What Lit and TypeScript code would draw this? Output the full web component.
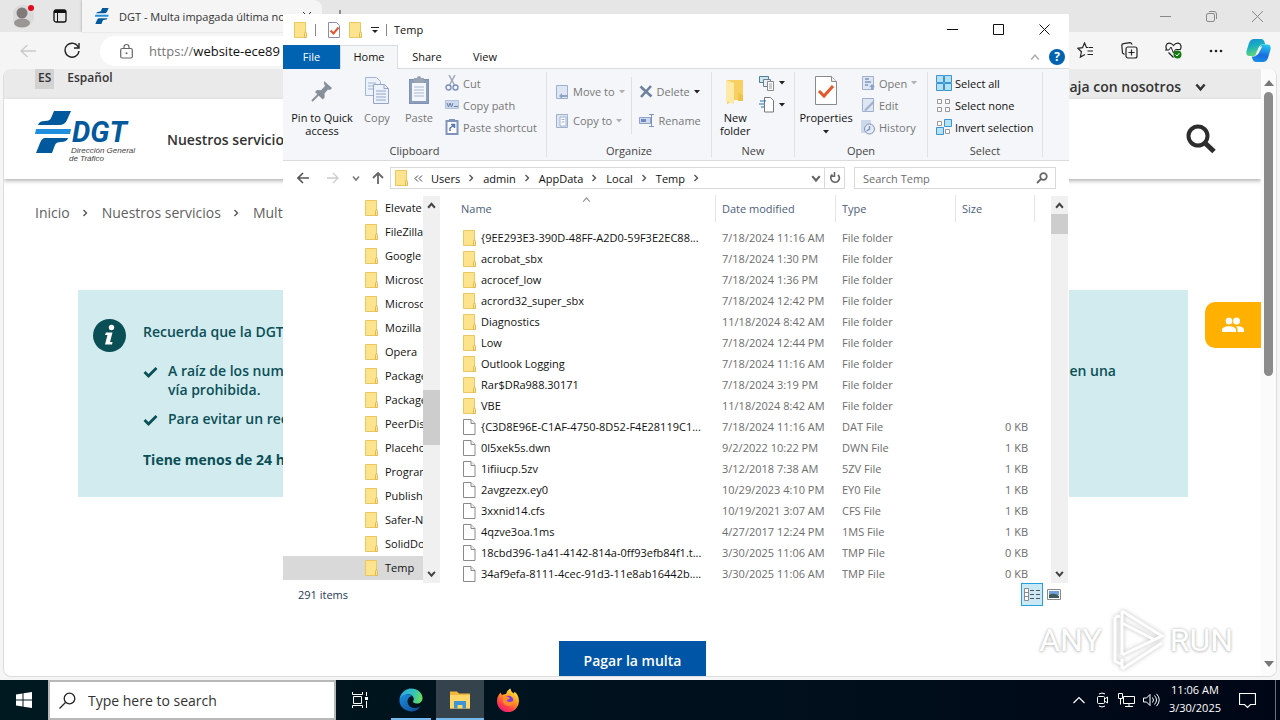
import { LitElement, html, svg, css, nothing, TemplateResult } from "lit";
import { customElement } from "lit/decorators.js";
import { classMap } from "lit/directives/class-map.js";

const base = css`
  :host { display: block; box-sizing: border-box; font-family: "Open Sans", "Noto Sans", sans-serif; }
  *, *::before, *::after { box-sizing: border-box; }
  button, input { font: inherit; color: inherit; background: none; border: 0; padding: 0; margin: 0; text-align: left; }
  input { outline: none; min-width: 0; }
  a { color: inherit; text-decoration: none; }
  svg { display: block; flex: none; }
  ul, ol, p { margin: 0; padding: 0; list-style: none; }
`;

const icon = (w: number, h: number, body: TemplateResult) =>
  html`<svg width=${w} height=${h} viewBox="0 0 ${w} ${h}" fill="none" aria-hidden="true">${body}</svg>`;

const chevron = (dir: "up" | "down" | "right", color = "#555", size = 8, width = 1.5) => {
  const d = dir === "up" ? "M1 6 4 2.5 7 6" : dir === "down" ? "M1 2.5 4 6 7 2.5" : "M2.5 1 5.5 4 2.5 7";
  return html`<svg width=${size} height=${size} viewBox="0 0 8 8" fill="none" aria-hidden="true">
    <path d=${d} stroke=${color} stroke-width=${width}/></svg>`;
};

const folder = () => icon(14, 16, svg`
  <path d="M0.5 0.5h11v15h-11z" fill="#fde38b" stroke="#ecc75f"/>
  <path d="M11 1.5h1v9h-1z" fill="#e9c765"/>
  <path d="M10.5 15.5v-4l1-2 1 2v4z" fill="#fdeaa8" stroke="#e3b84c"/>`);

const sheet = () => icon(14, 16, svg`
  <path d="M0.5 0.5h7.500l4 4v11h-11.500z" fill="#fff" stroke="#8a8a8a"/>
  <path d="M8 0.500v4h4" fill="#eee" stroke="#8a8a8a"/>`);

const caret = (color = "#222") => icon(6, 4, svg`<path d="M0 0h6l-3 3.500z" fill=${color}/>`);

const dgtShapes = svg`
  <path d="M19 0h17l-4 9q-2 5-8 5H3q1-4 7-4 5 0 6-3z" fill="#00599c"/>
  <path d="M1 18h35l-1 5H0z" fill="#1f8fdd"/>
  <path d="M10 27h23q-1 4-7 4-5 0-6 3l-3 8H1l4-10q2-5 5-5z" fill="#00599c"/>`;

@customElement("dgt-page")
export class DgtPage extends LitElement {
  static styles = [base, css`
    :host { display: flex; flex: 1; min-height: 0; background: #fff; border: 1px solid #dcdcdc; border-top: 0; border-radius: 8px; overflow: hidden; color: #333; font-size: 14px; }
    .doc { flex: 1; display: flex; flex-direction: column; min-width: 0; overflow: hidden; }
    .lang { height: 30px; flex: none; background: #eaeaea; display: flex; align-items: flex-start; padding: 0 55px 0 31px; font-weight: 600; }
    .code { height: 20px; padding: 0 3px; background: #d2d2d2; font-size: 12px; line-height: 18px; }
    .name { margin-left: 13px; font-size: 12px; line-height: 18px; flex: 1; }
    .work { display: flex; align-items: center; gap: 14px; height: 34px; }
    .head { height: 80px; flex: none; display: flex; align-items: center; padding: 0 45px 0 31px; box-shadow: 0 2px 4px rgba(0,0,0,.3); }
    .logo { display: block; margin-right: 30px; margin-top: -5px; }
    .main { flex: 1; font-weight: 600; }
    .crumbs { display: flex; align-items: center; gap: 13px; padding: 24px 31px 0; line-height: 20px; color: #5f5f5f; }
    .crumbs li { display: flex; align-items: center; gap: 11px; }
    .alert { display: flex; flex: none; gap: 17px; margin: 67px 73px 0 74px; padding: 29px 72px 25px 15px; background: #d2ebef; color: #0b4f56; font-weight: 600; height: 207px; }
    .body { flex: 1; line-height: 19px; padding-top: 3px; }
    .point { display: flex; gap: 10px; margin-top: 10px; }
    .point svg { margin-top: 5px; }
    .first { margin-top: 20px; }
    .wide { flex: 1; }
    .split { display: flex; justify-content: space-between; }
    .strong { font-weight: 700; margin-top: 22px; }
    .cta { display: flex; justify-content: center; margin-top: 144px; }
    .pay { background: #0055a6; color: #fff; font-weight: 600; padding: 0 25px; height: 40px; line-height: 40px; }
    .bar { width: 15px; flex: none; display: flex; flex-direction: column; align-items: center; background: #fbfbfb; padding: 11px 0 9px; }
    .thumb { width: 9px; height: 284px; border-radius: 5px; background: #8b8b8b; margin-top: 6px; }
    .grow { flex: 1; }
    .people { position: absolute; right: 19px; top: 302px; width: 56px; height: 46px; border-radius: 10px 0 0 10px; background: #ffb000; display: grid; place-items: center; }
  `];

  private sep() { return chevron("right", "#555", 8, 1.4); }
  private check() {
    return icon(15, 12, svg`<path d="M1.500 6 5.500 10 13.500 2" stroke="#0b4f56" stroke-width="2.800"/>`);
  }

  render() {
    return html`
      <div class="doc">
        <div class="lang">
          <a class="code" href="#es">ES</a><span class="name">Español</span>
          <a class="work" href="#trabaja">Trabaja con nosotros ${chevron("down", "#333", 11, 1.8)}</a>
        </div>
        <header class="head">
          <a class="logo" href="#inicio" aria-label="DGT">
            <svg width="102" height="52" viewBox="0 0 102 52">
              ${dgtShapes}
              <text x="37" y="31" font-family="Roboto" font-size="29" font-weight="700" font-style="italic" fill="#00599c">DGT</text>
              <text x="36" y="42" font-family="Liberation Sans" font-size="8" font-style="italic" fill="#444">Dirección General</text>
              <text x="34" y="50" font-family="Liberation Sans" font-size="8" font-style="italic" fill="#444">de Tráfico</text>
            </svg>
          </a>
          <nav class="main"><a href="#servicios">Nuestros servicios</a></nav>
          <button aria-label="Buscar">${icon(30, 30, svg`<circle cx="12" cy="12" r="9.500" stroke="#2d2d2d" stroke-width="4"/><path d="M18.500 18.500 28 27.500" stroke="#2d2d2d" stroke-width="5"/>`)}</button>
        </header>
        <ol class="crumbs">
          <li><a href="#inicio">Inicio</a>${this.sep()}</li>
          <li><a href="#servicios">Nuestros servicios</a>${this.sep()}</li>
          <li><span>Multas</span></li>
        </ol>
        <section class="alert">
          ${icon(33, 33, svg`<circle cx="16.500" cy="16.500" r="16.500" fill="#0b4f56"/><circle cx="18.500" cy="8.500" r="2.700" fill="#fff"/><path d="M13 13.500h6.500l-2.500 9.500h2.500l-.5 2.500h-7l2.500-9.500h-2.500z" fill="#fff"/>`)}
          <div class="body">
            <p>Recuerda que la DGT</p>
            <ul>
              <li class="point first">${this.check()}<div class="wide"><div class="split"><span>A raíz de los nume</span><span>en una</span></div>vía prohibida.</div></li>
              <li class="point">${this.check()}<div class="wide">Para evitar un recargo</div></li>
            </ul>
            <p class="strong">Tiene menos de 24 horas</p>
          </div>
        </section>
        <div class="cta"><button class="pay">Pagar la multa</button></div>
      </div>
      <div class="bar">
        ${icon(10, 6, svg`<path d="M5 0 10 6H0z" fill="#777"/>`)}
        <div class="thumb"></div><div class="grow"></div>
        ${icon(10, 6, svg`<path d="M5 6 10 0H0z" fill="#777"/>`)}
      </div>
      <button class="people" aria-label="Contacto">${icon(22, 16, svg`
        <circle cx="14.500" cy="4" r="3.500" fill="#fff"/>
        <path d="M0 15v-2c0-5 14-5 14 0v2zM15.500 15v-2.500q0-2-1.500-3.300 8-.5 8 3.800v2z" fill="#fff"/><circle cx="7" cy="4" r="4" fill="#fff" stroke="#ffb000"/>`)}</button>
    `;
  }
}

@customElement("edge-browser")
export class EdgeBrowser extends LitElement {
  static styles = [base, css`
    :host { display: flex; flex-direction: column; background: #f5f5f5; height: 100%; padding-bottom: 3px; }
    .strip { height: 32px; flex: none; display: flex; align-items: center; background: #e6e6e6; }
    .avatar { margin-left: 13px; }
    .tabs { margin-left: 16px; }
    .tab { align-self: stretch; width: 240px; margin-left: 15px; padding: 0 10px 0 13px; background: #f5f5f5; border-radius: 0 8px 0 0; display: flex; align-items: center; gap: 10px; font-size: 11px; color: #333; white-space: nowrap; box-shadow: -1px 0 2px rgba(0,0,0,.15); }
    .title { flex: 1; }
    .plus { margin-left: 12px; }
    .fill { flex: 1; }
    .wins { display: flex; gap: 35px; align-items: center; margin-right: 17px; }
    .tools { height: 37px; flex: none; display: flex; align-items: center; padding: 0 9px 0 20px; }
    .reload { margin-left: 27px; }
    .url { display: flex; align-items: center; flex: 1; height: 30px; margin: 0 40px 0 20px; padding-left: 20px; background: #fff; border-radius: 15px; font-size: 13px; color: #767676; }
    .url svg { margin-right: 16px; }
    .url input { flex: 1; color: #111; }
    .acts { display: flex; align-items: center; gap: 27px; }
    .copilot { margin-left: -4px; }
    .page { margin: 0 3px; }
  `];

  render() {
    return html`
      <div class="strip">
        <button class="avatar" aria-label="Profile">${icon(24, 24, svg`
          <circle cx="10" cy="12" r="11" fill="#dadada"/><circle cx="9" cy="9" r="5.500" fill="#807b78"/><ellipse cx="9" cy="19" rx="8" ry="4.500" fill="#9a9694"/><circle cx="18" cy="4" r="3" fill="#e00b1c"/>`)}</button>
        <button class="tabs" aria-label="Tab actions">${icon(14, 14, svg`<rect x="1" y="1" width="12" height="12" rx="2" stroke="#111" stroke-width="1.300"/><path d="M1 2.500h12" stroke="#111" stroke-width="3"/><path d="M4.500 3v10" stroke="#111"/>`)}</button>
        <div class="tab"><svg width="14" height="16" viewBox="0 0 37 42" aria-hidden="true">${dgtShapes}</svg><span class="title">DGT - Multa impagada última no</span>${icon(10, 10, svg`<path d="M1 1l8 8M9 1l-8 8" stroke="#333"/>`)}</div>
        <button class="plus" aria-label="New tab">${icon(12, 12, svg`<path d="M6 0v12M0 6h12" stroke="#333"/>`)}</button>
        <div class="fill"></div>
        <div class="wins">
          <button aria-label="Minimize">${icon(11, 11, svg`<path d="M0 5.500h11" stroke="#888"/>`)}</button>
          <button aria-label="Restore">${icon(11, 11, svg`<rect x=".5" y="2.500" width="8" height="8" rx="1.500" stroke="#888"/><path d="M3 .500h5q2.500 0 2.500 2.500v5" stroke="#888"/>`)}</button>
          <button aria-label="Close">${icon(11, 11, svg`<path d="M0 0l11 11M11 0 0 11" stroke="#888"/>`)}</button>
        </div>
      </div>
      <div class="tools">
        <button aria-label="Back">${icon(17, 14, svg`<path d="M7.500 1 1 7l6.500 6M1 7h15" stroke="#c9c9c9" stroke-width="1.300"/>`)}</button>
        <button class="reload" aria-label="Reload">${icon(16, 17, svg`<path d="M14.500 5.500A7 7 0 1 0 15 9" stroke="#222" stroke-width="1.400"/><path d="M15 1v5h-5" stroke="#222" stroke-width="1.400"/>`)}</button>
        <label class="url">
          ${icon(13, 16, svg`<rect x=".7" y="5.500" width="11.600" height="9.500" rx="1.500" stroke="#666" stroke-width="1.200"/><path d="M4 5.500V4a2.500 2.500 0 0 1 5 0v1.500" stroke="#666" stroke-width="1.200"/><circle cx="6.500" cy="10.300" r="1" fill="#666"/>`)}
          <span>https://</span><input aria-label="Address" .value=${"website-ece89"} />
        </label>
        <div class="acts">
          <button aria-label="Favorites">${icon(17, 17, svg`<path d="M11 5.500H9.500L7.500 1 5.500 5.700.8 6.300l3.600 3.500-1 5.200 4.600-2.500M11.500 5.500H16M10.500 9H16M10.500 12.500H16" stroke="#222" stroke-width="1.200"/>`)}</button>
          <button aria-label="Collections">${icon(17, 17, svg`<rect x="5" y="5" width="11" height="11" rx="2" stroke="#222" stroke-width="1.200"/><path d="M10.500 7.500v6M7.500 10.500h6M3.500 12.500 1.500 11 .800 3.500Q.800 2 2.500 1.700L9 .700q1.700 0 2 2" stroke="#222" stroke-width="1.200"/>`)}</button>
          <button aria-label="Browser essentials">${icon(17, 17, svg`<path d="M2 8C0 5 1 1.500 4 1.200Q6.500 1 8.500 3.500 10.500 1 13 1.200C16 1.500 17 5 15 8M3.500 10.500l5 5" stroke="#222" stroke-width="1.200"/><path d="M0 8h4l2-3 2.500 6 2-3.500H15" stroke="#222"/><circle cx="12.500" cy="12.500" r="4" fill="#107c10"/><path d="M10.500 12.500l1.500 1.500 2.500-3" stroke="#fff"/>`)}</button>
          <button aria-label="Settings">${icon(14, 4, svg`<circle cx="2" cy="2" r="1.300" fill="#222"/><circle cx="7" cy="2" r="1.300" fill="#222"/><circle cx="12" cy="2" r="1.300" fill="#222"/>`)}</button>
          <button class="copilot" aria-label="Copilot">${icon(25, 23, svg`
            <defs><linearGradient id="cpa" x1="0" y1="0" x2=".3" y2="1"><stop offset="0" stop-color="#168bd8"/><stop offset=".5" stop-color="#1bb1bd"/><stop offset="1" stop-color="#63d67c"/></linearGradient>
            <linearGradient id="cpb" x1=".5" y1="0" x2=".3" y2="1"><stop offset="0" stop-color="#23c3ee"/><stop offset=".6" stop-color="#1a6be0"/><stop offset="1" stop-color="#1792e8"/></linearGradient></defs>
            <path d="M8 0h7q2.500 0 3.500 3l.8 2.500h-2.800q-2.500 0-3.500 3l-2 6q-1 2.500-3.500 2.500H4q-4.500 0-3.500-5L3 4q1.500-4 5-4z" fill="url(#cpa)"/>
            <path d="M17 23h-7q-2.500 0-3.500-3L5.800 17.500H8q2.500 0 3.500-3l2-6Q14.500 5.500 17 5.500h4q4.500 0 3.500 5L22 19q-1.500 4-5 4z" fill="url(#cpb)"/>
            <path d="M13.200 7.500h3L12 15.500H9.500z" fill="#f5f5f5"/>`)}</button>
        </div>
      </div>
      <dgt-page class="page"></dgt-page>
    `;
  }
}

const TREE = ["Elevate", "FileZilla", "Google", "Microsoft", "Microsoft", "Mozilla", "Opera", "Package", "Package", "PeerDist", "Placehol", "Program", "Publishe", "Safer-Ne", "SolidDoc", "Temp"];

interface Entry { name: string; date: string; type: string; size?: string; }
const dir = (name: string, date: string): Entry => ({ name, date, type: "File folder" });
const file = (name: string, date: string, ext: string, size: string): Entry => ({ name, date, type: `${ext} File`, size: `${size} KB` });
const ENTRIES: Entry[] = [
  dir("{9EE293E3-390D-48FF-A2D0-59F3E2EC88...", "7/18/2024 11:16 AM"),
  dir("acrobat_sbx", "7/18/2024 1:30 PM"),
  dir("acrocef_low", "7/18/2024 1:36 PM"),
  dir("acrord32_super_sbx", "7/18/2024 12:42 PM"),
  dir("Diagnostics", "11/18/2024 8:42 AM"),
  dir("Low", "7/18/2024 12:44 PM"),
  dir("Outlook Logging", "7/18/2024 11:16 AM"),
  dir("Rar$DRa988.30171", "7/18/2024 3:19 PM"),
  dir("VBE", "11/18/2024 8:42 AM"),
  file("{C3D8E96E-C1AF-4750-8D52-F4E28119C1...", "7/18/2024 11:16 AM", "DAT", "0"),
  file("0l5xek5s.dwn", "9/2/2022 10:22 PM", "DWN", "1"),
  file("1ifiiucp.5zv", "3/12/2018 7:38 AM", "5ZV", "1"),
  file("2avgzezx.ey0", "10/29/2023 4:10 PM", "EY0", "1"),
  file("3xxnid14.cfs", "10/19/2021 3:07 AM", "CFS", "1"),
  file("4qzve3oa.1ms", "4/27/2017 12:24 PM", "1MS", "1"),
  file("18cbd396-1a41-4142-814a-0ff93efb84f1.t...", "3/30/2025 11:06 AM", "TMP", "0"),
  file("34af9efa-8111-4cec-91d3-11e8ab16442b....", "3/30/2025 11:06 AM", "TMP", "0"),
];

@customElement("explorer-window")
export class ExplorerWindow extends LitElement {
  static styles = [base, css`
    :host { display: flex; flex-direction: column; background: #fff; font-size: 11px; color: #111; line-height: 13px; white-space: nowrap; }
    .title { height: 31px; flex: none; display: flex; align-items: center; padding: 0 19px 0 11px; gap: 7px; }
    .line { width: 1px; height: 12px; background: #888; }
    .quick { display: flex; align-items: center; gap: 8px; padding-left: 4px; }
    .grow { flex: 1; }
    .wins { display: flex; gap: 35px; }
    .tabs { height: 24px; flex: none; display: flex; align-items: stretch; border-bottom: 1px solid #dadbdc; }
    .tab { height: 24px; width: 58px; padding-bottom: 2px; text-align: center; }
    .file { background: #0063b1; color: #fff; width: 57px; }
    .home { background: #f5f6f7; border: 1px solid #dadbdc; border-bottom: 0; }
    .help { display: flex; align-items: center; gap: 9px; padding-right: 4px; }
    .q { width: 16px; height: 16px; border-radius: 8px; background: #0063b1; color: #fff; font-weight: 700; font-size: 12px; line-height: 16px; text-align: center; }
    .ribbon { height: 92px; flex: none; display: flex; background: #f4f6f9; border-bottom: 1px solid #dadbdc; padding-top: 3px; }
    .group { display: flex; flex-direction: column; border-right: 1px solid #e0e1e3; height: 85px; }
    .cont { flex: 1; display: flex; }
    .cap { text-align: center; height: 16px; line-height: 16px; margin-bottom: -2px; color: #444; }
    .clip { width: 264px; } .org { width: 165px; } .new { width: 83px; } .open { width: 133px; } .sel { width: 115px; }
    .big { display: flex; flex-direction: column; align-items: center; text-align: center; gap: 6px; padding-top: 4px; }
    .pic { height: 29px; display: grid; place-items: center; }
    .big span { display: block; text-align: center; }
    .dim { color: #777; }
    .col { display: flex; flex-direction: column; }
    .col button { display: flex; align-items: center; gap: 4px; height: 22px; }
    .col.two { padding-top: 5px; }
    .col.two button { height: 29px; }
    .col.tight button { gap: 3px; }
    .b-pin { width: 78px; } .b-copy { width: 32px; } .b-paste { width: 52px; } .b-prop { width: 62px; margin-right: 4px; }
    .vr { width: 1px; height: 57px; background: #dfe0e2; margin: 5px 7px 0 6px; }
    .pad { padding-left: 8px; }
    .addr { height: 34px; flex: none; display: flex; align-items: center; padding: 0 13px 0 14px; }
    .navs { display: flex; align-items: center; width: 93px; gap: 18px; }
    .navs .tight { margin: 0 -6px 0 -5px; }
    .path { flex: 1; height: 22px; border: 1px solid #d9d9d9; display: flex; align-items: center; padding-left: 4px; }
    .path ol { display: flex; align-items: center; gap: 8px; margin-left: 5px; }
    .path li { display: flex; align-items: center; gap: 7px; }
    .ref { width: 20px; height: 20px; border-left: 1px solid #d9d9d9; margin-left: 3px; display: grid; place-items: center; }
    .find { width: 202px; height: 22px; border: 1px solid #d9d9d9; margin-left: 9px; display: flex; align-items: center; padding: 0 7px 0 8px; }
    .find input { flex: 1; }
    .find input::placeholder { color: #6d6d6d; opacity: 1; }
    .body { flex: 1; display: flex; min-height: 0; overflow: hidden; padding-right: 1px; }
    .tree { width: 140px; overflow: hidden; padding-top: 1px; }
    .tree button { display: flex; align-items: center; gap: 6px; height: 24px; width: 100%; padding: 0 0 1px 82px; }
    .tree .on { background: #d9d9d9; }
    .sb { width: 17px; background: #f0f0f0; display: flex; flex-direction: column; align-items: center; padding: 5px 0; margin-top: 1px; }
    .knob { width: 100%; background: #cdcdcd; }
    .k1 { height: 55px; margin-bottom: 124px; } .k2 { height: 20px; margin-top: 4px; }
    .files { flex: 1; padding: 0 0 0 15px; overflow: hidden; position: relative; }
    .sort { position: absolute; left: 142px; top: 0; }
    table { border-collapse: collapse; table-layout: fixed; width: 580px; color: #6d6d6d; }
    .c1 { width: 261px; } .c2, .c3 { width: 120px; } .c4 { width: 79px; }
    th { padding: 0 0 5px; font-weight: 400; text-align: left; color: #4c607a; height: 32px; }
    th div { height: 27px; line-height: 27px; padding-left: 6px; border-right: 1px solid #e5e5e5; }
    td { height: 21px; padding: 0 0 0 6px; }
    .nm { display: flex; align-items: center; gap: 4px; color: #111; padding-left: 2px; }
    .sz { text-align: right; padding-right: 7px; }
    .status { height: 23px; flex: none; display: flex; align-items: center; padding: 0 8px 0 15px; color: #1e395b; gap: 4px; }
    .view { width: 22px; height: 23px; border: 1px solid #26a0da; background: #cbe8f6; display: grid; place-items: center; }
  `];

  private smallDoc(extra: TemplateResult) {
    return icon(14, 16, svg`<path d="M1.500 1.500h11v13h-11z" fill="#dfe6f3" stroke="#9fb0cc"/>${extra}`);
  }

  private ribbon() {
    return html`
      <div class="ribbon">
        <section class="group clip"><div class="cont">
          <button class="big b-pin"><div class="pic">${icon(22, 22, svg`<path d="M13 1 21 8l-2 2-2-.5-3.500 4 .2 4-2 2L4 12l2-2 4 .2L14 6l-1-2.500z" fill="#87909a"/><path d="M8 14 1 21" stroke="#87909a" stroke-width="2"/>`)}</div><span>Pin to Quick<br />access</span></button>
          <button class="big b-copy dim"><div class="pic">${icon(26, 29, svg`<path d="M1.500 1.500h11l4 4v14h-15z" fill="#edf1f9" stroke="#a4b4d4"/><path d="M4 7h8M4 10h8M4 13h6" stroke="#a4b4d4"/><path d="M9.500 8.500h11l4 4v15h-15z" fill="#edf1f9" stroke="#93a6ca"/><path d="M20 8.500v4h4.500M12 15h10M12 18h10M12 21h10M12 24h10" stroke="#93a6ca"/>`)}</div><span>Copy</span></button>
          <button class="big b-paste dim"><div class="pic">${icon(22, 29, svg`<rect x="1.500" y="3.500" width="19" height="24" fill="#8c9dbe" stroke="#7f91b5"/><path d="M4 7h14v18H4z" fill="#f3f6fb"/><path d="M6 2h10v5H6z" fill="#9aa3b0"/><circle cx="11" cy="2" r="2" fill="#9aa3b0"/><path d="M6 11h10M6 14h10M6 17h10M6 20h10" stroke="#a9b8d6"/>`)}</div><span>Paste</span></button>
          <div class="col dim">
            <button>${icon(14, 16, svg`<path d="M4 0 9.500 10M10 0 4.500 10" stroke="#9aa5b8" stroke-width="1.400"/><circle cx="3.500" cy="12.500" r="2.500" stroke="#7d90b8" stroke-width="1.400"/><circle cx="10.500" cy="12.500" r="2.500" stroke="#7d90b8" stroke-width="1.400"/>`)}Cut</button>
            <button>${icon(14, 10, svg`<path d="M.5.500h13v8H.5z" fill="#cdd9ee" stroke="#b3c1dc"/><path d="M2 3l1.500 4L5 3l1.500 4L8 3M9 6.500h4" stroke="#6b7fa5"/>`)}Copy path</button>
            <button>${icon(14, 16, svg`<rect x="1.500" y="2" width="11" height="13" fill="#fff" stroke="#8094bb" stroke-width="2"/><path d="M4 0h6v3H4z" fill="#8094bb"/><path d="M5 12V9l4-3M6 5.500h3.500V9" stroke="#5478b4" stroke-width="1.500"/>`)}Paste shortcut</button>
          </div>
        </div><div class="cap">Clipboard</div></section>
        <section class="group org"><div class="cont pad">
          <div class="col two dim">
            <button>${this.smallDoc(svg`<path d="M11 5v8M7 9l-3 3 3 3v-2h6v-2H7z" fill="#8fa3c8"/>`)}Move to ${caret("#b0b0b0")}</button>
            <button>${this.smallDoc(svg`<path d="M5 4h6v9H5z" fill="#fff" stroke="#9fb0cc"/><path d="M6.500 6.500h3M6.500 9h3" stroke="#9fb0cc"/>`)}Copy to ${caret("#b0b0b0")}</button>
          </div>
          <div class="vr"></div>
          <div class="col two dim">
            <button>${icon(14, 13, svg`<path d="M1.500 1.500l11 10M12 1 2 12" stroke="#6d809f" stroke-width="2.600"/>`)}Delete ${caret()}</button>
            <button>${icon(16, 16, svg`<path d="M.5 4.500h11v6H.5z" fill="#cfdaee" stroke="#8fa3c8"/><path d="M2 6h5v3H2z" fill="#6e8bc0"/><path d="M10 1.500h5M12.500 1.500v12M10 13.500h5" stroke="#8094bb"/>`)}Rename</button>
          </div>
        </div><div class="cap">Organize</div></section>
        <section class="group new"><div class="cont pad">
          <button class="big"><div class="pic">${icon(20, 28, svg`<path d="M2 3h16v20h-8l-8 4z" fill="#f7cf62"/><path d="M1 3l8 3v21l-8-3z" fill="#fee9a6"/><path d="M13 16l5 2v6h-5z" fill="#f0c24b"/>`)}</div><span>New<br />folder</span></button>
          <div class="col pad">
            <button>${icon(16, 16, svg`<path d="M.5 1.500h9v6h-9z" fill="#cfe6ef" stroke="#4f7f98"/><path d="M4.500 4.500h7v7h-7z" fill="#e9f0f5" stroke="#6b7f90"/><path d="M8.500 6.500h6v9h-6z" fill="#fff" stroke="#888"/><path d="M10 9h3M10 11h3M10 13h3" stroke="#999"/>`)}${caret()}</button>
            <button>${icon(16, 16, svg`<path d="M5.500.500h6l3 3v11.500h-9z" fill="#fff" stroke="#777"/><path d="M1 4h6M0 7h5M2 10h3" stroke="#1d78b8"/>`)}${caret()}</button>
          </div>
        </div><div class="cap">New</div></section>
        <section class="group open"><div class="cont">
          <button class="big b-prop"><div class="pic">${icon(22, 29, svg`<path d="M.500.500h16l5 5v23H.5z" fill="#fff" stroke="#8a8a8a"/><path d="M16.500.500v5h5" fill="#eee" stroke="#8a8a8a"/><path d="M4 15l5 5 9-10" stroke="#e2572b" stroke-width="3"/>`)}</div><span>Properties</span>${caret()}</button>
          <div class="col dim">
            <button>${this.smallDoc(svg`<path d="M4 4h4M4 7h6M4 10h3" stroke="#8094bb" stroke-width="1.500"/><path d="M8 12l3-3 3 3h-2v3h-2v-3z" fill="#8fa3c8"/>`)}Open ${caret("#b0b0b0")}</button>
            <button>${this.smallDoc(svg`<path d="M3 13 12 4l1.500 1.500L5 14z" fill="#9fb0cc"/>`)}Edit</button>
            <button>${icon(14, 16, svg`<path d="M0 1h10v13H0z" fill="#cdd8ea"/><circle cx="8.500" cy="10" r="5" fill="#e4eaf5" stroke="#8094bb"/><path d="M8.500 7v3l-3 2" stroke="#8094bb" stroke-width="1.500"/>`)}History</button>
          </div>
        </div><div class="cap">Open</div></section>
        <section class="group sel"><div class="cont pad"><div class="col tight">
          <button>${icon(16, 16, svg`<path d="M.500.500h7v7h-7zM8.500.500h7v7h-7zM.500 8.500h7v7h-7zM8.500 8.500h7v7h-7z" fill="#b5e1fb" stroke="#3a95d2"/>`)}Select all</button>
          <button>${icon(16, 16, svg`<path d="M1.500 2.500h4v4h-4zM9.500 2.500h4v4h-4zM1.500 10.500h4v4h-4zM9.500 10.500h4v4h-4z" fill="#fff" stroke="#999"/>`)}Select none</button>
          <button>${icon(16, 16, svg`<path d="M1.500 2.500h4v4h-4zM9.500 10.500h4v4h-4z" fill="#fff" stroke="#999"/><path d="M8.500.500h7v7h-7zM.500 8.500h7v7h-7z" fill="#b5e1fb" stroke="#3a95d2"/>`)}Invert selection</button>
        </div></div><div class="cap">Select</div></section>
      </div>`;
  }

  render() {
    return html`
      <header class="title">
        ${folder()}<span class="line"></span>
        <div class="quick">
          ${icon(14, 16, svg`<path d="M1.500.500h8l3 3v12h-11z" fill="#fff" stroke="#8a8fa8"/><path d="M3.500 8.500l3 3 5-6" stroke="#e2572b" stroke-width="2"/>`)}
          ${folder()}${icon(8, 8, svg`<path d="M0 1.500h8" stroke="#222"/><path d="M1 4h6l-3 3z" fill="#222"/>`)}
        </div>
        <span class="line"></span>
        <span>Temp</span><span class="grow"></span>
        <div class="wins">
          <button aria-label="Minimize">${icon(11, 11, svg`<path d="M0 5.500h11" stroke="#111"/>`)}</button>
          <button aria-label="Maximize">${icon(11, 11, svg`<path d="M.500.500h10v10H.5z" stroke="#111"/>`)}</button>
          <button aria-label="Close">${icon(11, 11, svg`<path d="M.500.500l10 10M10.500.500l-10 10" stroke="#111"/>`)}</button>
        </div>
      </header>
      <nav class="tabs">
        <button class="tab file">File</button><button class="tab home">Home</button><button class="tab">Share</button><button class="tab">View</button>
        <span class="grow"></span><div class="help">${chevron("up", "#aaa", 10, 1.2)}<button class="q">?</button></div>
      </nav>
      ${this.ribbon()}
      <div class="addr">
        <div class="navs">
          <button aria-label="Back">${icon(12, 12, svg`<path d="M6 1 1 6l5 5M1 6h11" stroke="#555" stroke-width="1.600"/>`)}</button>
          <button aria-label="Forward">${icon(12, 12, svg`<path d="M6 1l5 5-5 5M11 6H0" stroke="#ccc" stroke-width="1.300"/>`)}</button>
          <button class="tight" aria-label="Recent">${chevron("down", "#777", 8)}</button>
          <button aria-label="Up">${icon(12, 12, svg`<path d="M1 6l5-5 5 5M6 1v11" stroke="#666" stroke-width="1.800"/>`)}</button>
        </div>
        <div class="path">${folder()}
          <ol><li>${icon(9, 7, svg`<path d="M4 .500 1 3.500l3 3M8 .500 5 3.500l3 3" stroke="#444"/>`)}</li>${["Users", "admin", "AppData", "Local", "Temp"].map((p) => html`<li><button>${p}</button>${chevron("right", "#555", 8, 1.4)}</li>`)}</ol>
          <span class="grow"></span>${chevron("down", "#666", 10, 1.8)}
          <button class="ref" aria-label="Refresh">${icon(12, 12, svg`<path d="M9 2.800A4.300 4.300 0 1 1 3.500 2.500" stroke="#666" stroke-width="1.700"/><path d="M5.500 0v4.200H1.500" stroke="#666" stroke-width="1.500"/>`)}</button>
        </div>
        <label class="find"><input type="text" placeholder="Search Temp" aria-label="Search Temp" />${icon(12, 12, svg`<circle cx="7.500" cy="4.500" r="3.300" stroke="#666" stroke-width="1.700"/><path d="M5 7 1 11" stroke="#666" stroke-width="1.800"/>`)}</label>
      </div>
      <div class="body">
        <ul class="tree">${TREE.map((n) => html`<li><button class=${classMap({ on: n === "Temp" })}>${folder()}${n}</button></li>`)}</ul>
        <div class="sb">${chevron("up", "#444", 9, 1.8)}<span class="grow"></span><div class="knob k1"></div>${chevron("down", "#444", 9, 1.8)}</div>
        <div class="files">
          <div class="sort">${chevron("up", "#888", 9, 1)}</div>
          <table>
            <colgroup><col class="c1" /><col class="c2" /><col class="c3" /><col class="c4" /></colgroup>
            <thead><tr>${["Name", "Date modified", "Type", "Size"].map((t) => html`<th scope="col"><div>${t}</div></th>`)}</tr></thead>
            <tbody>${ENTRIES.map((e) => html`<tr>
              <td><div class="nm">${e.size ? sheet() : folder()}${e.name}</div></td>
              <td>${e.date}</td><td>${e.type}</td><td class="sz">${e.size ?? nothing}</td></tr>`)}</tbody>
          </table>
        </div>
        <div class="sb">${chevron("up", "#444", 9, 1.8)}<div class="knob k2"></div><span class="grow"></span>${chevron("down", "#444", 9, 1.8)}</div>
      </div>
      <footer class="status">291 items<span class="grow"></span>
        <button class="view" aria-label="Details">${icon(16, 13, svg`<path d="M.500.500h4v12h-4zM.500 4.500h4M.500 8.500h4" stroke="#8a8a8a" fill="#fff"/><path d="M6 2.500h4M12 2.500h4M6 6.500h4M12 6.500h4M6 10.500h4M12 10.500h4" stroke="#555"/>`)}</button>
        <button aria-label="Large icons">${icon(14, 11, svg`<path d="M.500.500h13v10H.5z" fill="#fff" stroke="#8a8a8a"/><path d="M2 2h10v4H2z" fill="#6fa0e0"/><path d="M2 6q5-3 10 1v2H2z" fill="#3c5d5a"/>`)}</button>
      </footer>`;
  }
}

@customElement("task-bar")
export class TaskBar extends LitElement {
  static styles = [base, css`
    :host { display: flex; height: 40px; flex: none; background: linear-gradient(90deg, #001820, #00101c 60%, #000616); color: #fff; }
    button { display: grid; place-items: center; }
    .start { width: 48px; }
    .search { width: 288px; display: flex; align-items: center; gap: 12px; border: 2px solid #b8b8b8; background: #fff; color: #222; padding-left: 9px; font-size: 14px; }
    .search input { flex: 1; }
    .search input::placeholder { color: #333; opacity: 1; }
    .app { width: 48px; }
    .run { border-bottom: 2px solid #76b9ed; padding-top: 2px; width: 40px; margin: 0 5px 0 7px; }
    .active { background: #34434c; width: 48px; margin: 0; }
    .grow { flex: 1; }
    .tray { display: flex; align-items: center; gap: 8px; }
    .more { margin-right: 2px; }
    .clock { font-size: 11px; line-height: 18px; padding-top: 1px; margin-left: 9px; }
    .clock p { text-align: center; }
    .note { width: 34px; margin-left: 9px; }
    .edge { width: 1px; background: #6a6f7a; margin: 0 4px 0 11px; }
  `];

  render() {
    return html`
      <button class="start" aria-label="Start">${icon(16, 16, svg`<path d="M0 2.500 6.500 1.500v6H0zM7.500 1.300 16 0v7.500H7.500zM0 8.500h6.500v6L0 13.500zM7.500 8.500H16V16L7.500 14.700z" fill="#fff"/>`)}</button>
      <label class="search">${icon(17, 17, svg`<circle cx="10.500" cy="6.500" r="5.300" stroke="#222" stroke-width="1.300"/><path d="M6.500 10.500.500 16.500" stroke="#222" stroke-width="1.300"/>`)}<input type="text" placeholder="Type here to search" aria-label="Search" /></label>
      <button class="app" aria-label="Task view">${icon(17, 16, svg`<path d="M.500 0v2.500h10V0M.500 16v-2.500h10V16M1.500 4.500h8v7h-8zM14.500 0v4M14.500 9v7" stroke="#fff"/><path d="M13 5h3v3h-3z" fill="#fff"/>`)}</button>
      <button class="app run" aria-label="Edge">${icon(24, 24, svg`
        <defs><linearGradient id="ea" x1="0" y1=".3" x2="1" y2=".5"><stop offset="0" stop-color="#2aa6e8"/><stop offset=".6" stop-color="#35c1b8"/><stop offset="1" stop-color="#6be05a"/></linearGradient>
        <linearGradient id="eb" x1="0" y1="0" x2="1" y2="1"><stop offset="0" stop-color="#1b8de0"/><stop offset="1" stop-color="#0c4a94"/></linearGradient></defs>
        <path d="M.5 12A12 12 0 0 1 12 .500c7 0 11.500 5 11.500 9.500 0 3.500-2.500 5.500-5.500 5.500-2.500 0-4-1-4-2 0-.6.8-1.200.8-2.500 0-2.500-2.300-4.500-5.300-4.500C5 6.500 1.500 9 .5 12z" fill="url(#ea)"/>
        <path d="M.500 12c1-3.500 4.500-5.500 8-5.500 2 0 3.500.500 4.500 1.500-3 .5-4.500 3-4.500 5.500 0 4 4 7 8.500 6.500 2-.2 3.500-1 4.500-1.700C19.500 21.500 16 24 12 23.500 5.500 23 0 18 .5 12z" fill="url(#eb)"/>`)}</button>
      <button class="app run active" aria-label="File Explorer">${icon(22, 20, svg`<path d="M1 1.500h7l2 2h11v15H1z" fill="#f4b63c"/><path d="M1 5h20v13.500H1z" fill="#ffd869"/><path d="M5 11h12v7.500h-3.500V15h-5v3.500H5z" fill="#3f94d6"/>`)}</button>
      <button class="app" aria-label="Firefox">${icon(24, 24, svg`
        <defs><linearGradient id="fa" x1=".8" y1="0" x2=".2" y2="1"><stop offset="0" stop-color="#fff04a"/><stop offset=".4" stop-color="#ff9a1f"/><stop offset=".75" stop-color="#ff3b4c"/><stop offset="1" stop-color="#e31587"/></linearGradient></defs>
        <path d="M4.500 4.500 6 7q2-1 4-1 1-4 4.500-5.500 0 3 3 5 1-.5 1-2 4.500 4 4.500 9.500A11 11 0 0 1 1 13.500q0-5.500 3.500-9z" fill="url(#fa)"/>
        <circle cx="12.500" cy="12.500" r="4.800" fill="#7a3ee0"/><path d="M7 9q3-2 5 0l2 1q-1 2-3.500 2 1 2.500 4 2 3-.5 3.500-3.500 1.500 5-3 7-6 1.500-8-3.500z" fill="#ff8b2b"/>`)}</button>
      <span class="grow"></span>
      <div class="tray">
        <button class="more" aria-label="Hidden icons">${icon(14, 8, svg`<path d="M1.500 7 7 1.500 12.500 7" stroke="#fff" stroke-width="1.200"/>`)}</button>
        <button aria-label="Camera">${icon(14, 16, svg`<rect x="1.500" y="4.500" width="7" height="7" rx="1" stroke="#fff"/><path d="M8.500 7l3-2v6l-3-2M3 2q3-2 6 0M3 14q3 2 6 0" stroke="#fff"/>`)}</button>
        <button aria-label="Network">${icon(17, 15, svg`<path d="M5.500 3.500h11v7h-11zM11 10.500v3M7 13.500h8M.500.500h4v5h-4zM2.500 5.500v6" stroke="#fff"/>`)}</button>
        <button aria-label="Volume">${icon(17, 14, svg`<path d="M.500 5h3l3.500-3.500v11L3.500 9h-3zM9.500 4.500q2 2.500 0 5M11.500 2.500q4 4.500 0 9M13.500.800q5.500 6 0 12.400" stroke="#fff"/>`)}</button>
      </div>
      <div class="clock"><p>11:06 AM</p><p>3/30/2025</p></div>
      <button class="note" aria-label="Notifications">${icon(17, 17, svg`<path d="M.500 1.500h16v11h-5l-3 3-3-3h-5z" stroke="#fff" stroke-width="1.200"/>`)}</button>
      <span class="edge"></span>`;
  }
}

@customElement("app-root")
export class AppRoot extends LitElement {
  static styles = [base, css`
    :host { display: flex; flex-direction: column; height: 100vh; overflow: hidden; }
    .desk { position: relative; flex: 1; min-height: 0; }
    .explorer { position: absolute; left: 283px; top: 14px; width: 786px; height: 592px; }
    .mark { position: absolute; right: 47px; bottom: 9px; display: flex; align-items: center; gap: 6px; font-family: "Roboto", sans-serif; font-size: 32px; line-height: 60px; color: #fff; text-shadow: 0 0 3px #bbb, 0 1px 3px #ccc; pointer-events: none; }
    .mark svg { filter: drop-shadow(0 0 2px #bbb); }
  `];

  render() {
    return html`
      <div class="desk">
        <edge-browser></edge-browser>
        <explorer-window class="explorer"></explorer-window>
        <div class="mark"><span>ANY</span>${icon(56, 62, svg`<path d="M7 8v44l6 3M7 8l5-1M14 2v44M14 2 54 27 14 46M14 14l33 17M14 60 54 34M14 60V50" stroke="#fff" stroke-width="3"/>`)}<span>RUN</span></div>
      </div>
      <task-bar></task-bar>`;
  }
}
